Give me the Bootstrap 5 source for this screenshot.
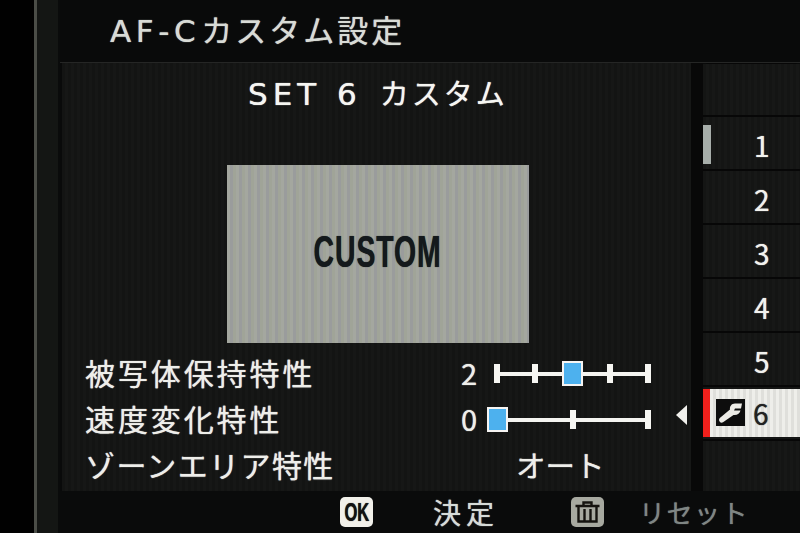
<!DOCTYPE html>
<html lang="ja">
<head>
<meta charset="utf-8">
<title>AF-Cカスタム設定</title>
<link href="https://cdn.jsdelivr.net/npm/bootstrap@5.3.0/dist/css/bootstrap.min.css" rel="stylesheet">
<style>
html,body{height:533px;overflow:hidden;background:#010101;}
body{font-family:"DejaVu Sans","Noto Sans CJK JP",sans-serif;color:#f2f2ee;text-shadow:0 0 1px currentColor;}
.cam-frame{width:800px;height:533px;}
.gutter-black{width:35px;background:#010101;}
.gutter-line{width:3px;background:#4b4d47;}
.gutter-band{width:22px;background:#141614;}
.gutter-gap{width:2px;background:#0a0b0b;}
.cam-main{width:740px;background:#090a0a;}
.cam-header{height:63px;padding-left:50px;padding-top:9px;border-bottom:1px solid #252625;font-size:31px;line-height:40px;letter-spacing:3px;color:#d8dbd6;background:#090a0a;font-family:"Noto Sans CJK JP",sans-serif;white-space:nowrap;}
.cam-header .lat{font-family:"DejaVu Sans",sans-serif;font-size:31px;letter-spacing:4.6px;margin-right:1px;}
.cam-body{height:428px;}
.set-panel{width:629px;margin-left:2px;background:repeating-linear-gradient(90deg,#131413 0 3px,#161716 3px 6px);}
.set-title{height:60px;padding-top:9px;padding-left:186px;font-size:29px;line-height:40px;letter-spacing:3px;color:#f6f6f2;font-family:"Noto Sans CJK JP",sans-serif;white-space:nowrap;}
.set-title .lat{font-family:"DejaVu Sans",sans-serif;font-size:31px;letter-spacing:5px;word-spacing:1px;margin-right:2px;}
.preview-wrap{height:226px;padding-left:165px;padding-top:42px;}
.preview-box{width:302px;height:178px;background:repeating-linear-gradient(90deg,#a4a79f 0 3px,#9a9c9c 3px 6px,#a0a498 6px 9px);color:#14191c;}
.preview-text{display:inline-block;font-family:"Liberation Sans",sans-serif;font-weight:700;font-size:45px;line-height:1;letter-spacing:1.5px;transform:scaleX(.63);margin-bottom:6px;}
.prop-row{height:46px;padding-left:23px;font-family:"Noto Sans CJK JP",sans-serif;font-size:30px;line-height:46px;letter-spacing:2.9px;white-space:nowrap;color:#eeeeea;}
.prop-row.zone{letter-spacing:1.4px;}
.prop-name{width:376px;}
.prop-num{width:33px;font-size:29px;letter-spacing:0;}
.prop-auto{padding-left:55px;letter-spacing:0;font-size:29.5px;}
.slider-track{width:157px;height:26px;margin-top:3px;background:linear-gradient(#f4f4f0,#f4f4f0) center/100% 4px no-repeat;}
.slider-tick{width:6px;height:19px;background:#f6f6f2;}
.slider-thumb{width:21px;height:25px;background:#4db1ee;border:2px solid #f6f4f2;margin:0 -7.5px;}
.slider-arrow{width:0;height:0;border-top:10px solid transparent;border-bottom:10px solid transparent;border-right:11px solid #f0f0ec;margin-left:25px;margin-bottom:7px;}
.spacer-gap{width:12px;background:#080808;}
.set-list{width:97px;background:#070707;gap:2px;padding-top:1px;}
.set-item{height:52px;padding-left:51px;background:repeating-linear-gradient(90deg,#141514 0 3px,#171817 3px 6px);font-family:"Noto Sans CJK JP",sans-serif;font-size:28px;line-height:57px;color:#f2f2ee;border:0;border-radius:0;}
.set-item.rest{flex:1 1 auto;}
.scroll-thumb{width:8px;height:39px;background:#a7aeaa;left:0;top:8px;}
.set-item.active-set{background:#141514;padding:2px 0 4px 0;}
.active-inner{height:48px;background:repeating-linear-gradient(90deg,#eeeeea 0 3px,#dfdfdb 3px 6px);border-left:7px solid #f0201c;color:#222;padding-left:6px;line-height:48px;}
.wrench-box{width:29px;height:27px;margin-right:8px;background:#0d0d0d;}
.cam-footer{height:42px;background:#0a0b0b;font-family:"Noto Sans CJK JP",sans-serif;font-size:28px;line-height:42px;letter-spacing:5px;}
.key-ok{width:33px;height:30px;background:#f1f0ea;border-radius:5px;color:#121212;}
.key-ok-wrap{margin-left:280px;}
.key-ok-text{display:inline-block;font-family:"Liberation Sans",sans-serif;font-weight:700;font-size:25px;letter-spacing:0;line-height:30px;transform:scaleX(.66);}
.foot-decide{margin-left:60px;width:138px;color:#d6dbd8;}
.key-trash{width:33px;height:30px;background:#a7a9a0;border-radius:5px;}
.foot-reset{margin-left:35px;font-size:26px;color:#7f8684;letter-spacing:1.5px;}
</style>
</head>
<body class="m-0">
<div class="cam-frame d-flex">
  <div class="gutter-black"></div>
  <div class="gutter-line"></div>
  <div class="gutter-band"></div>
  <div class="gutter-gap"></div>
  <div class="cam-main d-flex flex-column">
    <div class="cam-header"><span class="lat">AF-C</span>カスタム設定</div>
    <div class="cam-body d-flex">
      <div class="set-panel d-flex flex-column">
        <div class="set-title"><span class="lat">SET 6 </span>カスタム</div>
        <div class="preview-wrap">
          <div class="preview-box d-flex align-items-center justify-content-center"><span class="preview-text">CUSTOM</span></div>
        </div>
        <div class="prop-row d-flex align-items-center">
          <span class="prop-name">被写体保持特性</span>
          <span class="prop-num">2</span>
          <div class="slider-track d-flex align-items-center justify-content-between">
            <span class="slider-tick"></span><span class="slider-tick"></span><span class="slider-thumb"></span><span class="slider-tick"></span><span class="slider-tick"></span>
          </div>
        </div>
        <div class="prop-row d-flex align-items-center">
          <span class="prop-name">速度変化特性</span>
          <span class="prop-num">0</span>
          <div class="slider-track d-flex align-items-center justify-content-between">
            <span class="slider-thumb"></span><span class="slider-tick"></span><span class="slider-tick"></span>
          </div>
          <span class="slider-arrow"></span>
        </div>
        <div class="prop-row zone d-flex align-items-center">
          <span class="prop-name">ゾーンエリア特性</span>
          <span class="prop-auto">オート</span>
        </div>
      </div>
      <div class="spacer-gap"></div>
      <div class="set-list list-group d-flex flex-column">
        <div class="set-item"></div>
        <div class="set-item position-relative"><span class="scroll-thumb position-absolute"></span>1</div>
        <div class="set-item">2</div>
        <div class="set-item">3</div>
        <div class="set-item">4</div>
        <div class="set-item">5</div>
        <div class="set-item active-set">
          <div class="active-inner d-flex align-items-center">
            <span class="wrench-box d-flex align-items-center justify-content-center">
              <svg width="27" height="24" viewBox="0 0 27 24" aria-hidden="true"><path d="M25 2.5H18C14.5 2.5 12.5 5.5 13 8.5L2.8 17C.8 19 3.3 23 6 21.200L16.500 14C20 14.500 23 12.500 23.500 9.500H17L18 7.500H24Z" fill="#ecebe6"/></svg>
            </span>6
          </div>
        </div>
        <div class="set-item rest"></div>
      </div>
    </div>
    <div class="cam-footer d-flex align-items-center">
      <span class="key-ok-wrap key-ok d-flex align-items-center justify-content-center"><span class="key-ok-text">OK</span></span>
      <span class="foot-decide">決定</span>
      <span class="key-trash d-flex align-items-center justify-content-center">
        <svg width="29" height="26" viewBox="0 0 29 26" aria-hidden="true"><path d="M2.500 7H26.500M10.500 6.500V3.500H18.500V6.500M5.500 7V22.500H23.500V7M11.500 10V22M17.500 10V22" fill="none" stroke="#15130f" stroke-width="2.400"/></svg>
      </span>
      <span class="foot-reset">リセット</span>
    </div>
  </div>
</div>
</body>
</html>
